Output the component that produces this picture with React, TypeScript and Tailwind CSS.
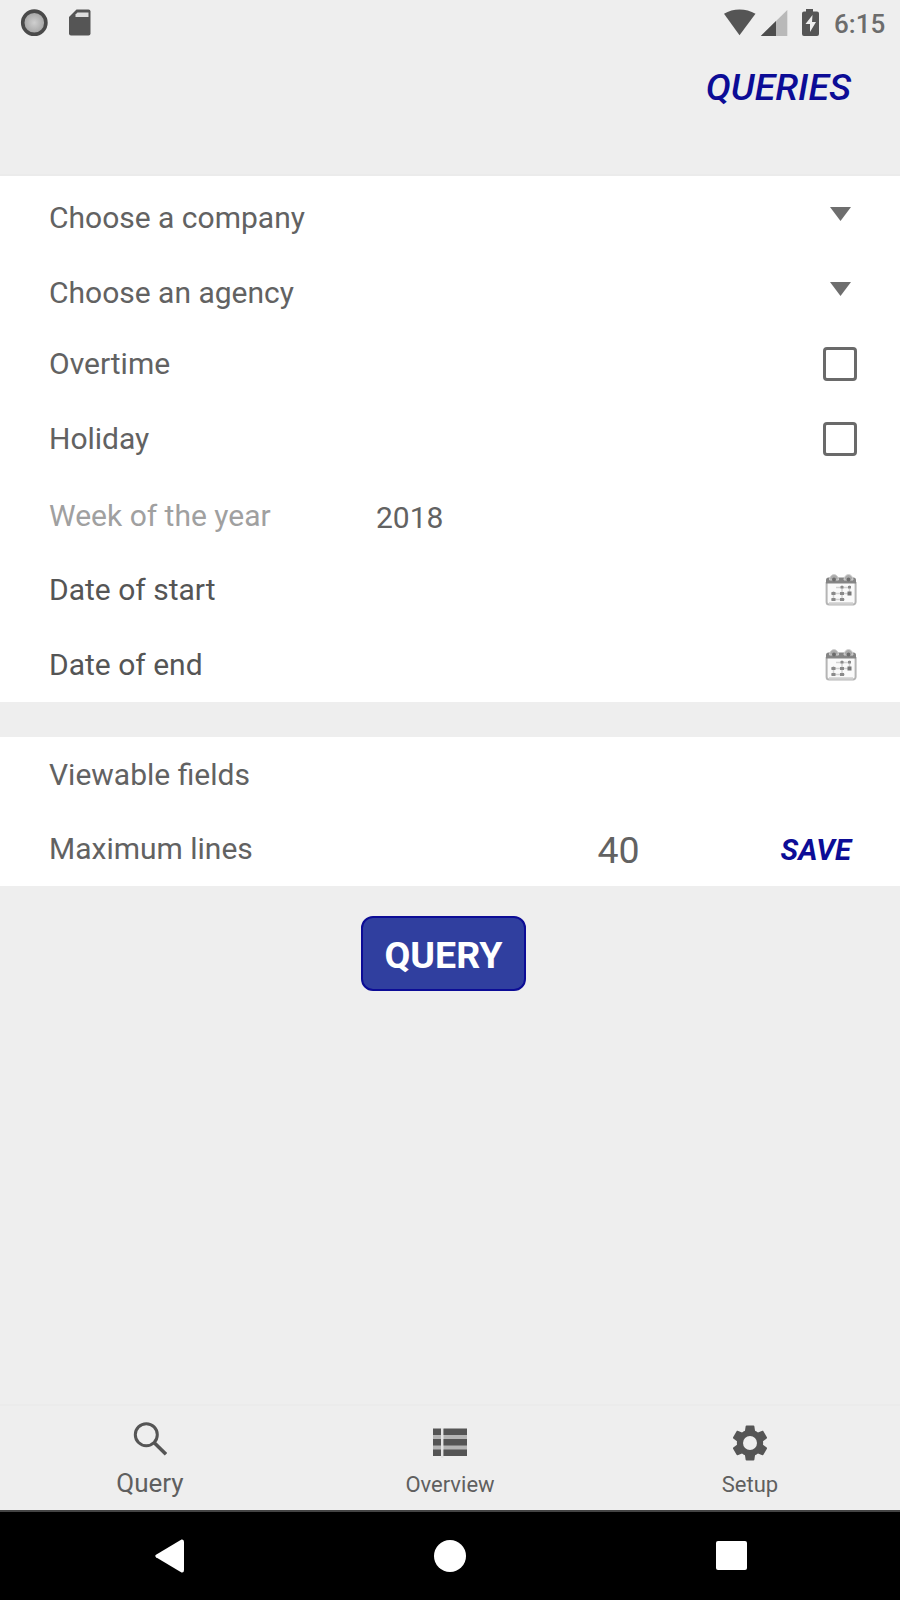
import { useState } from 'react';
import type { ReactNode } from 'react';
import { clsx } from 'clsx';

function StatusBar() {
  return (
    <div className="flex h-[46px] items-center justify-between pl-5 pr-[15px] text-[#555]">
      <div className="flex items-center gap-5">
        <svg width="28" height="46" viewBox="0 0 28 46">
          <defs>
            <radialGradient id="record">
              <stop offset="0" stopColor="#cfcfcf" />
              <stop offset="1" stopColor="#a2a2a2" />
            </radialGradient>
          </defs>
          <circle cx="14.300" cy="22.700" r="11.600" fill="url(#record)" stroke="#4a4a4a" strokeWidth="3.600" />
        </svg>
        <svg width="24" height="46" viewBox="0 0 24 46" fill="currentColor">
          <path d="M8.500 9.500h12a2 2 0 0 1 2 2v22a2 2 0 0 1-2 2H3a2 2 0 0 1-2-2V17z" />
          <path d="M9.500 12.500h11v4.500H7.500v-2.500z" fill="#dedede" />
        </svg>
      </div>
      <div className="flex items-center">
        <svg width="110" height="46" viewBox="0 0 110 46" fill="currentColor">
          <path d="M15.500 35.300 0 13.700C9 8 22 8 31.500 13.700z" />
          <path d="M63.300 10v26H36.800z" fill="#b9b9b9" />
          <path d="M52 21v15H36.800z" fill="#4d4d4d" />
          <path
            fillRule="evenodd"
            d="M82 9h7v2.500h4a2 2 0 0 1 2 2V34a2 2 0 0 1-2 2H80a2 2 0 0 1-2-2V13.500a2 2 0 0 1 2-2h2zM88.500 15 81.500 24h4.500v8l6-10h-4z"
          />
        </svg>
        <span className="w-[51px] pt-px text-[26px] font-medium leading-none text-[#6c6c6c]">6:15</span>
      </div>
    </div>
  );
}

function Row({ label, className, children }: { label: string; className?: string; children?: ReactNode }) {
  return (
    <div className={clsx('flex h-[75px] items-center pl-[49px] text-[30px] leading-none', className)}>
      <span className="flex-1 whitespace-nowrap">{label}</span>
      {children}
    </div>
  );
}

function Caret() {
  return (
    <svg className="-mt-[8px] mr-[49px]" width="21" height="14" viewBox="0 0 21 14" fill="#6e6e6e">
      <path d="M0 0h21L10.500 14z" />
    </svg>
  );
}

function Checkbox({ label }: { label: string }) {
  const [checked, setChecked] = useState(false);
  return (
    <button
      type="button"
      role="checkbox"
      aria-checked={checked}
      aria-label={label}
      onClick={() => setChecked(c => !c)}
      className={clsx(
        'mr-[43px] size-[34px] rounded-[4px] border-[3px] border-[#6a6a6a]',
        checked ? 'bg-[#303f9f]' : 'bg-white',
      )}
    />
  );
}

function CalendarIcon() {
  return (
    <svg className="mr-[43px]" width="32" height="34" viewBox="0 0 32 34">
      <path d="M1.600 9v20a2.500 2.500 0 0 0 2.500 2.500h24a2.500 2.500 0 0 0 2.500-2.500V9" fill="#fafafa" stroke="#b5b5b5" strokeWidth="2" />
      <path d="M4 30.500h24" stroke="#cfcfcf" strokeWidth="2.500" />
      <path d="M1 10.500V7a2.500 2.500 0 0 1 2.500-2.500h25a2.500 2.500 0 0 1 2.500 2.500v3.500z" fill="#858585" />
      <path d="M4.500 7a4.500 5.500 0 0 1 9 0zM19 7a4.500 5.500 0 0 1 9 0z" fill="#ababab" stroke="#d0d0d0" strokeWidth="1" />
      <circle cx="9" cy="6.500" r="2" fill="#6c6c6c" />
      <circle cx="23.500" cy="6.500" r="2" fill="#6c6c6c" />
      <path d="M11 14.500h14M6 20.500h19M6 26.500h14M8.500 18v10M17 12v16M24.500 12v10" stroke="#d2d2d2" strokeWidth="1.500" />
      <g fill="#8a8a8a">
        <rect x="15.500" y="13" width="3" height="2.500" />
        <rect x="23" y="13" width="3" height="2.500" />
        <rect x="6.500" y="19" width="4" height="3" />
        <rect x="15" y="19" width="4" height="3" />
        <rect x="22.500" y="18.500" width="4" height="4" fill="#777" />
        <rect x="6.500" y="25" width="4" height="3" />
        <rect x="15" y="25" width="4" height="3" />
      </g>
    </svg>
  );
}

function BottomNav() {
  return (
    <nav className="grid h-[106px] grid-cols-3 border-t-2 border-[#ebebeb] text-[#5f5f5f]">
      <button type="button" className="flex flex-col items-center pt-[15px]">
        <svg width="34" height="36" viewBox="0 0 34 36" fill="none" stroke="#555" strokeWidth="3">
          <circle cx="13.300" cy="13.700" r="11" />
          <path d="M21 21.500 33 33.300" strokeWidth="3.600" />
        </svg>
        <span className="mt-[13px] text-[26px] leading-[26px]">Query</span>
      </button>
      <button type="button" className="flex flex-col items-center pt-[22px]">
        <svg width="34" height="30" viewBox="0 0 34 30" fill="#555">
          <path d="M0 1h34v27H0z" fill="#b5b5b5" />
          <path d="M8 0h2.500v30H8z" fill="#e4e4e4" />
          <path d="M0 .500h8V7H0zM0 11h8v6.500H0zM0 21.500h8V28H0zM10.500.500H34V7H10.500zM10.500 11H34v6.500H10.500zM10.500 21.500H34V28H10.500z" />
        </svg>
        <span className="mt-[16px] text-[22px] leading-[22px]">Overview</span>
      </button>
      <button type="button" className="flex flex-col items-center pt-4">
        <svg width="42" height="42" viewBox="0 0 24 24">
          <path
            fill="#555"
            d="M19.430 12.980c.040-.320.070-.640.070-.980s-.030-.660-.070-.980l2.110-1.650c.190-.150.240-.420.120-.640l-2-3.460c-.120-.220-.390-.300-.610-.220l-2.490 1c-.520-.400-1.080-.730-1.690-.980l-.380-2.650C14.460 2.180 14.250 2 14 2h-4c-.250 0-.460.180-.490.420l-.380 2.650c-.610.250-1.170.590-1.690.980l-2.490-1c-.230-.090-.490 0-.610.220l-2 3.460c-.130.220-.070.490.120.640l2.110 1.650c-.040.320-.070.650-.070.980s.030.660.070.980l-2.110 1.650c-.190.150-.240.420-.120.640l2 3.460c.120.220.390.300.610.220l2.490-1c.520.400 1.080.730 1.690.980l.380 2.650c.030.240.240.420.490.420h4c.250 0 .460-.180.490-.420l.380-2.650c.610-.250 1.170-.590 1.690-.980l2.490 1c.230.090.490 0 .610-.220l2-3.460c.120-.220.070-.490-.120-.640l-2.110-1.650z"
          />
          <circle cx="12" cy="12" r="4" fill="#eee" />
        </svg>
        <span className="mt-[10px] text-[22px] leading-[22px]">Setup</span>
      </button>
    </nav>
  );
}

function SystemNav() {
  return (
    <div className="flex h-[90px] items-center justify-between border-t-2 border-[#444] bg-black pl-[155px] pr-[153px]">
      <svg className="-mt-px" width="29" height="34" viewBox="0 0 29 34" fill="#fff">
        <path d="M1 15.800 26.500.500Q29 0 29 3v28q0 3-2.500 2.500L1 18.200Q-.500 17 1 15.800z" />
      </svg>
      <span className="-mt-px size-8 rounded-full bg-white" />
      <span className="-mt-[2px] h-[29px] w-[31px] rounded-[2px] bg-white" />
    </div>
  );
}

export default function App() {
  return (
    <div className="flex h-[1600px] w-[900px] flex-col overflow-hidden bg-[#eee] font-['Roboto',sans-serif] text-[#626262]">
      <StatusBar />
      <header className="flex h-[130px] justify-end border-b-2 border-[#ebebeb] pr-[49px] pt-[22px]">
        <h1 className="text-[37.5px] font-medium italic leading-[38px] text-[#0c0c96]">QUERIES</h1>
      </header>

      <section className="h-[526px] bg-white">
        <Row label="Choose a company" className="pt-[8px]">
          <Caret />
        </Row>
        <Row label="Choose an agency" className="pt-[8px]">
          <Caret />
        </Row>
        <Row label="Overtime">
          <Checkbox label="Overtime" />
        </Row>
        <Row label="Holiday">
          <Checkbox label="Holiday" />
        </Row>
        <Row label="Week of the year" className="pt-[4px] text-[#a0a0a0]">
          <span className="w-[524px] pt-[4px] text-[#626262]">2018</span>
        </Row>
        <Row label="Date of start" className="pt-[2px] text-[#555]">
          <CalendarIcon />
        </Row>
        <Row label="Date of end" className="pt-[2px] text-[#555]">
          <CalendarIcon />
        </Row>
      </section>

      <section className="mt-[35px] h-[149px] bg-white">
        <Row label="Viewable fields" className="pt-px" />
        <Row label="Maximum lines" className="pb-[2px]">
          <span className="w-[183px] pt-[5px] text-[37.5px]">40</span>
          <button type="button" className="mr-[49px] pt-[4px] text-[29.5px] font-bold italic text-[#0c0c96]">
            SAVE
          </button>
        </Row>
      </section>

      <div className="mt-[30px] flex flex-1 items-start pl-[361px]">
        <button
          type="button"
          className="h-[75px] w-[165px] rounded-[12px] border-2 border-[#0c0c96] bg-[#303f9f] pt-1 text-[37.5px] font-bold leading-none text-white"
        >
          QUERY
        </button>
      </div>

      <BottomNav />
      <SystemNav />
    </div>
  );
}
